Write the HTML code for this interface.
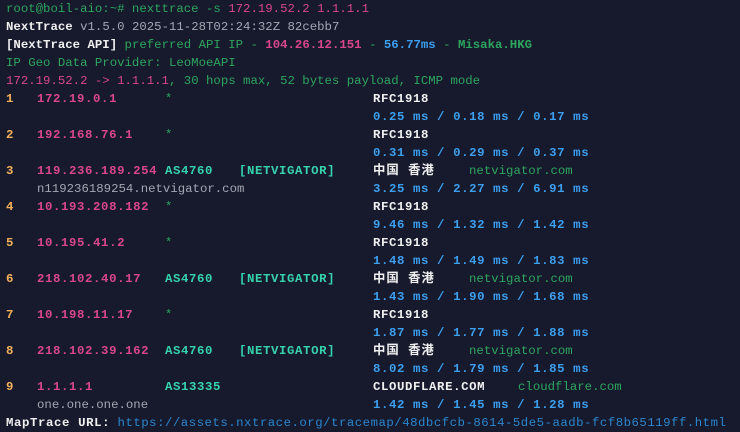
<!DOCTYPE html>
<html><head><meta charset="utf-8"><style>
html,body{margin:0;padding:0;background:#161a2c;width:740px;height:432px;overflow:hidden}
.r{position:relative;height:18px;line-height:18px;font-family:"Liberation Mono","Noto Sans CJK SC",monospace;font-size:12.35px;white-space:pre;color:#c8c8d0}
.r span{position:absolute;top:0}
i{font-style:normal}
.g{color:#2ea55f}.p{color:#d9468c}.w{color:#f0f0f0;font-weight:bold;letter-spacing:0.6px}.gr{color:#a4a6b4}
.o{color:#f5b15a;font-weight:bold}.pb{color:#d9468c;font-weight:bold;letter-spacing:0.6px}.t{color:#36d3ae;font-weight:bold;letter-spacing:0.6px}
.b{color:#3c9ff0;font-weight:bold;letter-spacing:0.6px}.l{color:#2a86cf}.gbold{color:#2ea55f;font-weight:bold}
.h i{letter-spacing:0}
.c0{left:6px}.c1{left:37px}.c2{left:165px}.c3{left:239px}.c4{left:373px}.c5{left:469px}.c6{left:518px}
.cj{letter-spacing:1px}
</style></head><body>
<div class="r"><span class="c0"><i class="g">root@boil-aio:~# nexttrace -s </i><i class="p">172.19.52.2 1.1.1.1</i></span></div>
<div class="r h"><span class="c0"><i class="w">NextTrace</i> <i class="gr">v1.5.0 2025-11-28T02:24:32Z 82cebb7</i></span></div>
<div class="r h"><span class="c0"><i class="w">[NextTrace API]</i> <i class="g">preferred API IP - </i><i class="pb">104.26.12.151</i><i class="g"> - </i><i class="b">56.77ms</i><i class="g"> - </i><i class="gbold">Misaka.HKG</i></span></div>
<div class="r"><span class="c0 g">IP Geo Data Provider: LeoMoeAPI</span></div>
<div class="r"><span class="c0"><i class="p">172.19.52.2 -&gt; 1.1.1.1</i><i class="g">, 30 hops max, 52 bytes payload, ICMP mode</i></span></div>
<div class="r"><span class="c0 o">1</span><span class="c1 pb">172.19.0.1</span><span class="c2 g">*</span><span class="c4 w">RFC1918</span></div>
<div class="r"><span class="c4 b">0.25 ms / 0.18 ms / 0.17 ms</span></div>
<div class="r"><span class="c0 o">2</span><span class="c1 pb">192.168.76.1</span><span class="c2 g">*</span><span class="c4 w">RFC1918</span></div>
<div class="r"><span class="c4 b">0.31 ms / 0.29 ms / 0.37 ms</span></div>
<div class="r"><span class="c0 o">3</span><span class="c1 pb">119.236.189.254</span><span class="c2 t">AS4760</span><span class="c3 t">[NETVIGATOR]</span><span class="c4 w cj">中国 香港</span><span class="c5 g">netvigator.com</span></div>
<div class="r"><span class="c1 gr">n119236189254.netvigator.com</span><span class="c4 b">3.25 ms / 2.27 ms / 6.91 ms</span></div>
<div class="r"><span class="c0 o">4</span><span class="c1 pb">10.193.208.182</span><span class="c2 g">*</span><span class="c4 w">RFC1918</span></div>
<div class="r"><span class="c4 b">9.46 ms / 1.32 ms / 1.42 ms</span></div>
<div class="r"><span class="c0 o">5</span><span class="c1 pb">10.195.41.2</span><span class="c2 g">*</span><span class="c4 w">RFC1918</span></div>
<div class="r"><span class="c4 b">1.48 ms / 1.49 ms / 1.83 ms</span></div>
<div class="r"><span class="c0 o">6</span><span class="c1 pb">218.102.40.17</span><span class="c2 t">AS4760</span><span class="c3 t">[NETVIGATOR]</span><span class="c4 w cj">中国 香港</span><span class="c5 g">netvigator.com</span></div>
<div class="r"><span class="c4 b">1.43 ms / 1.90 ms / 1.68 ms</span></div>
<div class="r"><span class="c0 o">7</span><span class="c1 pb">10.198.11.17</span><span class="c2 g">*</span><span class="c4 w">RFC1918</span></div>
<div class="r"><span class="c4 b">1.87 ms / 1.77 ms / 1.88 ms</span></div>
<div class="r"><span class="c0 o">8</span><span class="c1 pb">218.102.39.162</span><span class="c2 t">AS4760</span><span class="c3 t">[NETVIGATOR]</span><span class="c4 w cj">中国 香港</span><span class="c5 g">netvigator.com</span></div>
<div class="r"><span class="c4 b">8.02 ms / 1.79 ms / 1.85 ms</span></div>
<div class="r"><span class="c0 o">9</span><span class="c1 pb">1.1.1.1</span><span class="c2 t">AS13335</span><span class="c4 w">CLOUDFLARE.COM</span><span class="c6 g">cloudflare.com</span></div>
<div class="r"><span class="c1 gr">one.one.one.one</span><span class="c4 b">1.42 ms / 1.45 ms / 1.28 ms</span></div>
<div class="r"><span class="c0"><i class="w">MapTrace URL:</i> <i class="l" style="letter-spacing:0.5px">https://assets.nxtrace.org/tracemap/48dbcfcb-8614-5de5-aadb-fcf8b65119ff.html</i></span></div>
</body></html>
